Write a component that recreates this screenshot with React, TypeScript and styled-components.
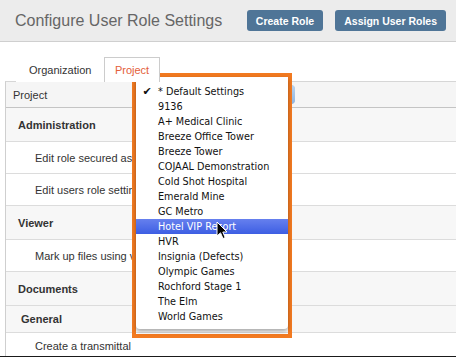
import React from 'react';
import styled, { createGlobalStyle } from 'styled-components';

const GlobalStyle = createGlobalStyle`
  html, body {
    margin: 0;
    padding: 0;
    background: #ffffff;
  }
`;

const Page = styled.div`
  position: relative;
  width: 456px;
  height: 357px;
  box-sizing: border-box;
  overflow: hidden;
  border-bottom: 1px solid #1a1a1a;
  font-family: 'Liberation Sans', Arial, sans-serif;
  color: #333;
`;

// 상단 헤더
const Header = styled.div`
  display: flex;
  align-items: center;
  height: 41px;
  padding: 0 10px 0 15px;
  background-color: #ececec;
  border-bottom: 1px solid #cfcfcf;
`;

const Title = styled.h1`
  flex: 1;
  margin: 0;
  font-size: 16px;
  font-weight: normal;
  color: #666;
`;

const ButtonGroup = styled.div`
  display: flex;
  gap: 12px;
`;

const ActionButton = styled.button`
  height: 21px;
  padding: 0 9px;
  border: none;
  border-radius: 3px;
  background-color: #4f7597;
  color: #fff;
  font-family: 'Liberation Sans', Arial, sans-serif;
  font-size: 10.5px;
  font-weight: bold;
`;

const Body = styled.div`
  padding-left: 5px;
  padding-top: 15px;
`;

const TabBar = styled.div`
  display: flex;
  height: 24px;
  padding-left: 11px;
`;

const Tab = styled.div<{ active?: boolean }>`
  display: flex;
  align-items: center;
  padding: 0 ${({ active }) => (active ? '9.5px' : '12px')};
  font-size: 11px;
  color: ${({ active }) => (active ? '#e4603a' : '#333')};
  background-color: #fff;
  border: 1px solid ${({ active }) => (active ? '#cccccc' : 'transparent')};
  border-bottom: none;
  margin-bottom: -1px;
  position: relative;
  z-index: 1;
`;

const Table = styled.div`
  border-top: 1px solid #d6d6d6;
  border-left: 1px solid #cfcfcf;
`;

const ProjectRow = styled.div`
  display: flex;
  align-items: center;
  height: 25px;
  background-color: #f5f5f5;
  border-bottom: 1px solid #c4c4c4;
  font-size: 11px;
`;

const ProjectLabel = styled.div`
  width: 126px;
  padding-left: 7px;
`;

const SelectBox = styled.div`
  position: relative;
  width: 156px;
  height: 19px;
  box-sizing: border-box;
  border: 1px solid #b5b5b5;
  border-radius: 4px;
  background: linear-gradient(#ffffff, #ececec);

  &::after {
    content: '';
    position: absolute;
    right: -1px;
    top: -1px;
    bottom: -1px;
    width: 16px;
    border-radius: 0 4px 4px 0;
    background: linear-gradient(#b9d3ee, #8fb4df);
  }
`;

type RowKind = 'section' | 'item' | 'sub' | 'last';

const rowHeights: Record<RowKind, number> = { section: 33, item: 31, sub: 26, last: 26 };
const rowIndent: Record<RowKind, number> = { section: 12, item: 29, sub: 15, last: 29 };

const Row = styled.div<{ kind: RowKind }>`
  display: flex;
  align-items: center;
  height: ${({ kind }) => rowHeights[kind]}px;
  padding-left: ${({ kind }) => rowIndent[kind]}px;
  border-bottom: 1px solid #dcdcdc;
  background-color: ${({ kind }) =>
    kind === 'item' || kind === 'last' ? '#ffffff' : '#f7f7f7'};
  font-size: 11px;
  font-weight: ${({ kind }) => (kind === 'item' || kind === 'last' ? 'normal' : 'bold')};
  color: #333;
  white-space: nowrap;
`;

// 드롭다운 강조 박스
const Highlight = styled.div`
  position: absolute;
  left: 132px;
  top: 73px;
  width: 160px;
  height: 265px;
  box-sizing: border-box;
  border: 4px solid #f27a21;
  padding-bottom: 5px;
`;

const Menu = styled.div`
  height: 100%;
  box-sizing: border-box;
  padding: 7px 0 5px;
  background-color: #fff;
  border-radius: 0 0 4px 4px;
  box-shadow: 0 2px 4px rgba(0, 0, 0, 0.35);
  font-family: 'DejaVu Sans', 'Liberation Sans', sans-serif;
  font-size: 9.7px;
  color: #111;
`;

const MenuItem = styled.div<{ selected?: boolean }>`
  position: relative;
  display: grid;
  grid-template-columns: 22px 1fr;
  align-items: center;
  height: 15px;
  color: ${({ selected }) => (selected ? '#fff' : '#111')};
  background: ${({ selected }) =>
    selected ? 'linear-gradient(#6680ee, #3d5ee3)' : 'transparent'};
  white-space: nowrap;
`;

const Check = styled.span`
  text-align: center;
  font-size: 11px;
`;

const Cursor = styled.svg`
  position: absolute;
  left: 80px;
  top: 2px;
`;

const projects = [
  '* Default Settings',
  '9136',
  'A+ Medical Clinic',
  'Breeze Office Tower',
  'Breeze Tower',
  'COJAAL Demonstration',
  'Cold Shot Hospital',
  'Emerald Mine',
  'GC Metro',
  'Hotel VIP Resort',
  'HVR',
  'Insignia (Defects)',
  'Olympic Games',
  'Rochford Stage 1',
  'The Elm',
  'World Games',
];

const App: React.FC = () => {
  return (
    <Page>
      <GlobalStyle />
      <Header>
        <Title>Configure User Role Settings</Title>
        <ButtonGroup>
          <ActionButton>Create Role</ActionButton>
          <ActionButton>Assign User Roles</ActionButton>
        </ButtonGroup>
      </Header>

      <Body>
        <TabBar>
          <Tab>Organization</Tab>
          <Tab active>Project</Tab>
        </TabBar>
        <Table>
          <ProjectRow>
            <ProjectLabel>Project</ProjectLabel>
            <SelectBox />
          </ProjectRow>
          <Row kind="section">Administration</Row>
          <Row kind="item">Edit role secured assets</Row>
          <Row kind="item">Edit users role settings</Row>
          <Row kind="section">Viewer</Row>
          <Row kind="item">Mark up files using viewer</Row>
          <Row kind="section">Documents</Row>
          <Row kind="sub">General</Row>
          <Row kind="last">Create a transmittal</Row>
        </Table>
      </Body>

      <Highlight>
        <Menu>
          {projects.map((name, i) => (
            <MenuItem key={name} selected={name === 'Hotel VIP Resort'}>
              <Check>{i === 0 ? '✔' : ''}</Check>
              <span>{name}</span>
              {name === 'Hotel VIP Resort' && (
                <Cursor width="13" height="19" viewBox="0 0 13 19">
                  <path
                    d="M1 1 L1 15 L4.5 11.8 L7 17.5 L9.2 16.6 L6.8 11 L11 11 Z"
                    fill="#000"
                    stroke="#fff"
                    strokeWidth="1"
                    strokeLinejoin="round"
                  />
                </Cursor>
              )}
            </MenuItem>
          ))}
        </Menu>
      </Highlight>
    </Page>
  );
};

export default App;
